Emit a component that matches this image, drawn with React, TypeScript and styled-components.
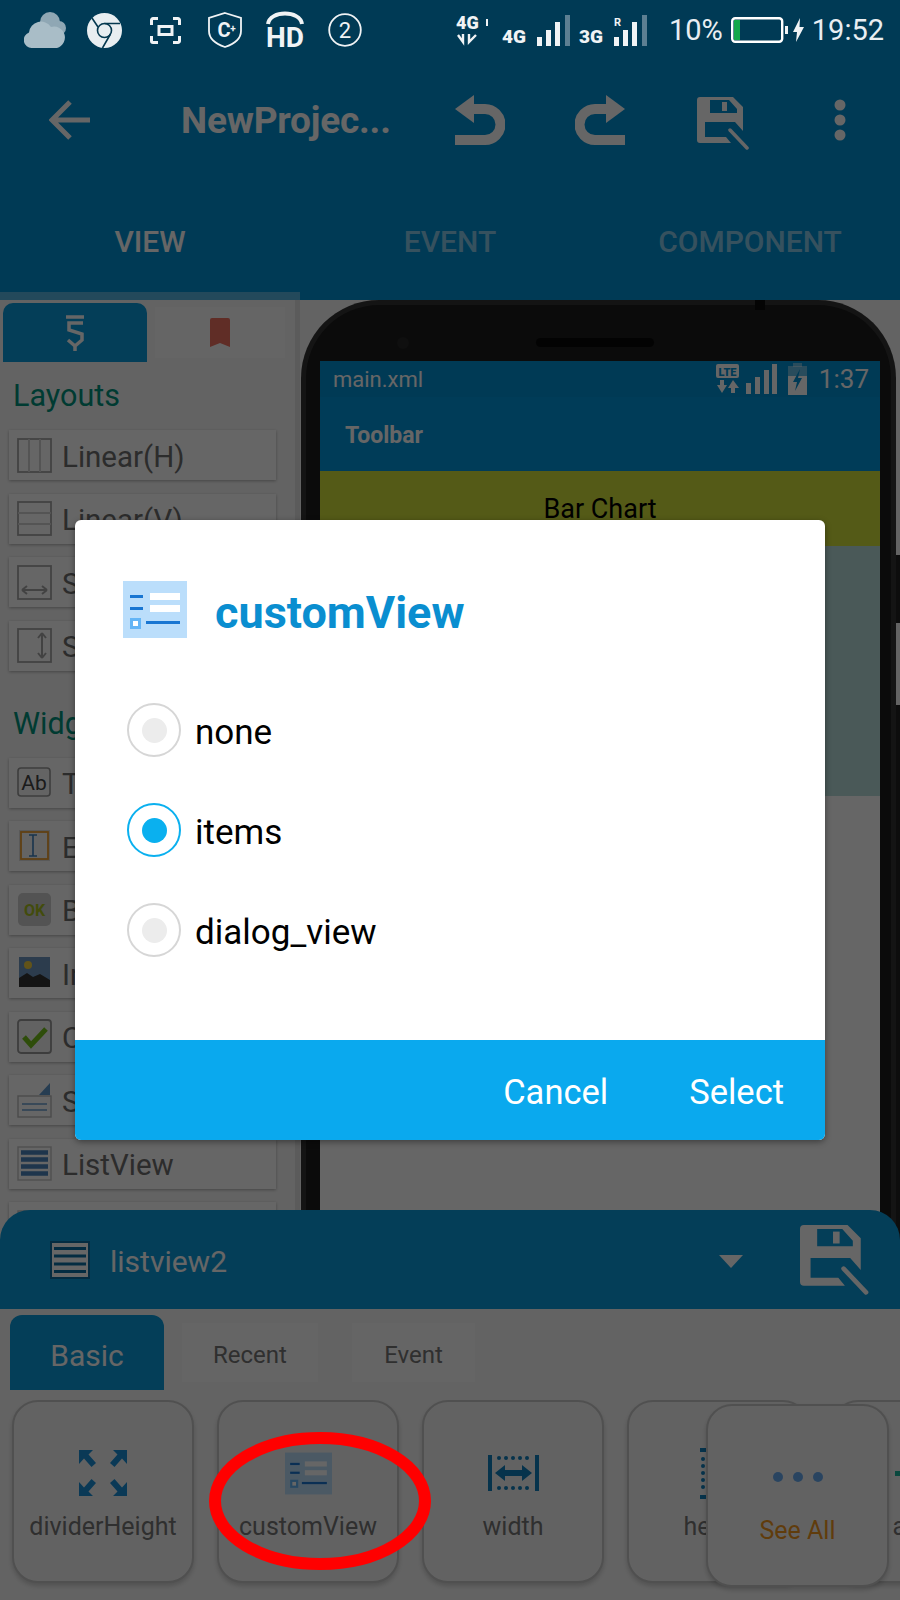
import React, { FC } from "react";
import styled, { createGlobalStyle } from "styled-components";

const GlobalStyle = createGlobalStyle`
  html, body {
    margin: 0;
    padding: 0;
    background: #f8f8f8;
    font-family: Roboto, "Liberation Sans", sans-serif;
  }
  * { box-sizing: border-box; }
`;

const Page = styled.div`
  position: relative;
  width: 900px;
  height: 1600px;
  overflow: hidden;
  background: #f8f8f8;
`;

const Header = styled.header`
  height: 300px;
  background: #0091d5;
`;

const StatusBar = styled.div`
  position: relative;
  z-index: 3;
  height: 60px;
  display: flex;
  align-items: center;
  justify-content: space-between;
  padding: 0 16px 0 24px;
  color: #e9eef2;
`;

const StatusGroup = styled.div`
  display: flex;
  align-items: center;
`;

const StatusIcon = styled.svg<{ $ml?: number }>`
  display: block;
  flex: none;
  margin-left: ${(p) => p.$ml ?? 0}px;
`;

const StatusText = styled.span<{ $ml: number }>`
  margin-left: ${(p) => p.$ml}px;
  font-size: 29px;
  line-height: 34px;
`;

const NetLabel = styled.span<{ $ml: number }>`
  width: 24px;
  margin: 14px 0 0 ${(p) => p.$ml}px;
  font-size: 19px;
  font-weight: 900;
  line-height: 22px;
  text-align: center;
  color: #f0f3f5;
`;

const Toolbar = styled.div`
  height: 120px;
  display: flex;
  align-items: center;
`;

const ToolSlot = styled.div<{ $w: number }>`
  width: ${(p) => p.$w}px;
  display: flex;
  justify-content: center;
  align-items: center;
`;

const SaveSlot = styled(ToolSlot)`
  padding: 7px 0 0 7px;
`;

const Title = styled.div`
  flex: 1;
  padding-left: 41px;
  color: #fff;
  font-size: 37px;
  font-weight: 700;
  letter-spacing: -0.2px;
`;

const Tabs = styled.div`
  height: 120px;
  display: flex;
`;

const Tab = styled.div<{ $active?: boolean }>`
  flex: 1;
  display: flex;
  align-items: center;
  justify-content: center;
  padding-top: 10px;
  font-size: 30px;
  font-weight: 500;
  color: ${(p) => (p.$active ? "#fff" : "rgba(255,255,255,0.55)")};
  border-bottom: 8px solid ${(p) => (p.$active ? "rgba(255,255,255,0.35)" : "transparent")};
`;

const Workspace = styled.div`
  height: 1300px;
  display: flex;
`;

const Palette = styled.aside`
  width: 300px;
  flex: none;
  padding: 3px 0 0 3px;
  border-right: 5px solid #e4e4e4;
`;

const PaletteTabs = styled.div`
  display: flex;
  align-items: flex-start;
  gap: 8px;
  height: 59px;
`;

const PaletteTabOn = styled.div`
  width: 144px;
  height: 59px;
  border-radius: 10px 10px 0 0;
  background: #0b9bdc;
  display: flex;
  align-items: center;
  justify-content: center;
`;

const PaletteTabOff = styled.div`
  width: 130px;
  height: 51px;
  margin-top: 4px;
  background: #fdfdfd;
  display: flex;
  align-items: center;
  justify-content: center;
`;

const SectionTitle = styled.div<{ $mt?: number }>`
  height: 68px;
  margin-top: ${(p) => p.$mt ?? 0}px;
  padding-left: 10px;
  font-size: 30.5px;
  line-height: 68px;
  color: #00937d;
`;

const PaletteList = styled.div`
  display: flex;
  flex-direction: column;
  gap: 13.5px;
  padding-left: 6px;
  width: 273px;
`;

const PaletteItem = styled.div`
  height: 50px;
  display: flex;
  align-items: center;
  gap: 10px;
  padding: 3px 0 0 8px;
  background: #fff;
  box-shadow: 0 1px 3px rgba(0, 0, 0, 0.3);
  font-size: 29.5px;
  color: #6e6e6e;
  white-space: nowrap;
`;

const Preview = styled.main`
  flex: 1;
  padding: 0 4px 0 1px;
`;

const PhoneFrame = styled.div`
  position: relative;
  height: 1300px;
  background: #1c1c1c;
  border: 5px solid #343434;
  border-bottom: 0;
  border-radius: 78px 78px 0 0;
  padding: 0 11px 0 14px;
`;

const SideButton = styled.div<{ $top: number; $h: number }>`
  position: absolute;
  right: -9px;
  top: ${(p) => p.$top}px;
  width: 4px;
  height: ${(p) => p.$h}px;
  background: #222;
`;

const TopNotch = styled.div`
  position: absolute;
  top: -5px;
  left: 449px;
  width: 10px;
  height: 10px;
  background: #0a0a0a;
`;

const PhoneTop = styled.div`
  height: 56px;
  display: flex;
  align-items: center;
`;

const Camera = styled.div`
  width: 12px;
  height: 12px;
  margin: 20px 0 0 77px;
  border-radius: 50%;
  background: #262626;
`;

const Speaker = styled.div`
  width: 118px;
  height: 9px;
  margin: 18px 0 0 127px;
  border-radius: 5px;
  background: #080808;
`;

const Screen = styled.div`
  height: 1240px;
  background: #fff;
`;

const ScreenStatus = styled.div`
  height: 36px;
  display: flex;
  align-items: center;
  justify-content: space-between;
  padding: 0 11px 0 13px;
  background: #0091d5;
  color: #fff;
`;

const FileName = styled.span`
  font-size: 22px;
`;

const ScreenClock = styled.span`
  margin-left: 12px;
  font-size: 26px;
`;

const ScreenToolbar = styled.div`
  height: 74px;
  display: flex;
  align-items: center;
  padding: 2px 0 0 25px;
  background: #0096dc;
  color: #fff;
  font-size: 23px;
  font-weight: 700;
`;

const ChartTitle = styled.div`
  height: 75px;
  display: flex;
  justify-content: center;
  padding-top: 22px;
  background: #d2e13a;
  color: #000;
  font-size: 27px;
  line-height: 32px;
`;

const ChartArea = styled.div`
  height: 250px;
  background: #b9dedc;
`;

const Sheet = styled.section`
  position: absolute;
  z-index: 1;
  left: 0;
  right: 0;
  bottom: 0;
  height: 390px;
`;

const SheetHeader = styled.div`
  height: 99px;
  display: flex;
  align-items: center;
  padding: 0 30px 0 50px;
  border-radius: 30px 30px 0 0;
  background: #0b9bdc;
  color: #fff;
`;

const SheetName = styled.span`
  flex: 1;
  margin: 4px 0 0 20px;
  font-size: 30px;
`;

const SheetCaret = styled.div`
  width: 0;
  height: 0;
  margin: 4px 57px 0 0;
  border-left: 12.5px solid transparent;
  border-right: 12.5px solid transparent;
  border-top: 13px solid #fff;
`;

const SheetBody = styled.div`
  position: relative;
  height: 291px;
  padding-top: 6px;
  background: #f8f8f8;
`;

const PropTabs = styled.div`
  height: 75px;
  display: flex;
  align-items: flex-start;
  padding-left: 10px;
`;

const PropTabOn = styled.div`
  width: 154px;
  height: 75px;
  padding-top: 6px;
  border-radius: 12px 12px 0 0;
  background: #0b9bdc;
  color: #fff;
  font-size: 30px;
  display: flex;
  align-items: center;
  justify-content: center;
`;

const PropTabOff = styled.div<{ $w: number; $ml: number }>`
  width: ${(p) => p.$w}px;
  height: 59px;
  margin: 8px 0 0 ${(p) => p.$ml}px;
  padding-top: 5px;
  background: #fcfcfc;
  color: #777;
  font-size: 24px;
  display: flex;
  align-items: center;
  justify-content: center;
`;

const Cards = styled.div`
  display: flex;
  gap: 23px;
  margin-top: 10px;
  padding-left: 12px;
  overflow: hidden;
  height: 194px;
`;

const Card = styled.div`
  width: 182px;
  height: 183px;
  flex: none;
  display: flex;
  flex-direction: column;
  align-items: center;
  padding-top: 46px;
  border: 2.5px solid #c8c8c8;
  border-radius: 26px;
  background: #f6f6f6;
  box-shadow: 0 3px 5px rgba(0, 0, 0, 0.18);
`;

const CardIcon = styled.div`
  height: 50px;
  display: flex;
  align-items: center;
  justify-content: center;
`;

const CardLabel = styled.div<{ $color?: string }>`
  margin-top: 14px;
  font-size: 25px;
  line-height: 30px;
  color: ${(p) => p.$color ?? "#777"};
  white-space: nowrap;
`;

const SeeAllCard = styled(Card)`
  position: absolute;
  left: 706px;
  top: 95px;
  width: 183px;
`;

const Scrim = styled.div`
  position: absolute;
  z-index: 2;
  inset: 0;
  background: rgba(0, 0, 0, 0.6);
`;

const Dialog = styled.div`
  position: absolute;
  z-index: 4;
  left: 75px;
  top: 520px;
  width: 750px;
  height: 620px;
  display: flex;
  flex-direction: column;
  border-radius: 6px;
  overflow: hidden;
  background: #fff;
  box-shadow: 0 2px 6px rgba(0, 0, 0, 0.4);
`;

const DialogHead = styled.div`
  display: flex;
  align-items: center;
  gap: 28px;
  padding: 61px 0 0 48px;
`;

const DialogTitle = styled.div`
  margin-top: 6px;
  font-size: 45px;
  font-weight: 700;
  line-height: 51px;
  color: #0a8ed0;
`;

const Options = styled.div`
  flex: 1;
  padding: 42px 0 0 52px;
`;

const Option = styled.div`
  height: 100px;
  display: flex;
  align-items: center;
  gap: 14px;
  font-size: 35px;
  color: #000;
`;

const OptionLabel = styled.span`
  margin-top: 4px;
`;

const Radio = styled.div<{ $checked?: boolean }>`
  width: 54px;
  height: 54px;
  display: flex;
  align-items: center;
  justify-content: center;
  border-radius: 50%;
  border: ${(p) => (p.$checked ? "2px solid #0ab0ef" : "2.5px solid #d6d6d6")};
  &::after {
    content: "";
    width: 25px;
    height: 25px;
    border-radius: 50%;
    background: ${(p) => (p.$checked ? "#0ab0ef" : "#ececec")};
  }
`;

const DialogFooter = styled.div`
  height: 100px;
  display: flex;
  align-items: center;
  justify-content: flex-end;
  gap: 81px;
  padding: 4px 41px 0 0;
  background: #0aa9ee;
  color: #fff;
  font-size: 34.5px;
`;

const Annotation = styled.svg`
  position: absolute;
  z-index: 4;
  left: 209px;
  top: 1432px;
`;

const ARROW = { fill: "none", stroke: "#fff", strokeWidth: 5 };

const SaveIcon: FC<{ size: number }> = ({ size }) => (
  <svg width={size} height={size} viewBox="0 0 53 53">
    <path
      fill="#fff"
      fillRule="evenodd"
      d="M3 0H36L46 10V34L38 25H8V40H29L34 46H3A3 3 0 0 1 0 43V3A3 3 0 0 1 3 0ZM13 3V16H40V12L32 3Z"
    />
    <rect x="25" y="5" width="5" height="9" fill="#fff" />
    <path d="M33 33L50 51" stroke="#fff" strokeWidth="3.500" strokeLinecap="round" fill="none" />
  </svg>
);

const UndoIcon: FC<{ flip?: boolean }> = ({ flip }) => (
  <svg width="50" height="50" viewBox="0 0 50 50">
    <g transform={flip ? "matrix(-1 0 0 1 50 0)" : undefined}>
      <path d="M0 14L19 0V28Z" fill="#fff" />
      <path d="M14 14H30A15.500 15.500 0 0 1 30 45H0" fill="none" stroke="#fff" strokeWidth="10" />
    </g>
  </svg>
);

const CustomViewIcon: FC<{ w: number; h: number }> = ({ w, h }) => (
  <svg width={w} height={h} viewBox="0 0 64 57">
    <rect width="64" height="57" fill="#bbdefb" />
    <rect x="7" y="14" width="13" height="3" fill="#1976d2" />
    <rect x="7" y="26" width="13" height="3" fill="#1976d2" />
    <rect x="27" y="12" width="30" height="7" fill="#fff" />
    <rect x="27" y="24" width="30" height="7" fill="#fff" />
    <rect x="7" y="37" width="11" height="11" fill="#64b5f6" />
    <rect x="10" y="40" width="5" height="5" fill="#fff" />
    <rect x="23" y="40" width="34" height="3" fill="#1976d2" />
  </svg>
);

const CORNER = "M0 0H14L9.500 4.500L17 13L12.500 17L5 8.500L0 14Z";

const ExpandIcon: FC = () => (
  <svg width="48" height="46" viewBox="0 0 48 46" fill="#1a90d8">
    <path d={CORNER} />
    <path d={CORNER} transform="matrix(-1 0 0 1 48 0)" />
    <path d={CORNER} transform="matrix(1 0 0 -1 0 46)" />
    <path d={CORNER} transform="matrix(-1 0 0 -1 48 46)" />
  </svg>
);

const WidthIcon: FC<{ rotate?: boolean }> = ({ rotate }) => (
  <svg width={rotate ? 36 : 51} height={rotate ? 51 : 36} viewBox={rotate ? "0 0 36 51" : "0 0 51 36"}>
    <g fill="#1180bd" transform={rotate ? "matrix(0 1 1 0 0 0)" : undefined}>
      <rect width="4" height="36" />
      <rect x="47" width="4" height="36" />
      {[10, 17, 24, 31, 38].map((x) => (
        <React.Fragment key={x}>
          <circle cx={x + 1} cy="3" r="2" />
          <circle cx={x + 1} cy="33" r="2" />
        </React.Fragment>
      ))}
      <path d="M7 18L17 10V15H34V10L44 18L34 26V21H17V26Z" />
    </g>
  </svg>
);

const TileBox: FC<{ children: React.ReactNode }> = ({ children }) => (
  <svg width="35" height="35" viewBox="0 0 35 35" fill="none" style={{ flex: "none", marginTop: -3 }}>
    {children}
  </svg>
);

const LINE = "#d2d2d2";
const DARK = "#a6a6a6";

const ICONS: Record<string, React.ReactNode> = {
  linearH: (
    <>
      <rect x="1" y="1" width="33" height="33" stroke={DARK} strokeWidth="1.800" />
      <path d="M12 1V34M23 1V34" stroke={LINE} strokeWidth="2" />
    </>
  ),
  linearV: (
    <>
      <rect x="1" y="1" width="33" height="33" stroke={DARK} strokeWidth="1.800" />
      <path d="M1 12H34M1 23H34" stroke={LINE} strokeWidth="2" />
    </>
  ),
  scrollH: (
    <>
      <rect x="1" y="1" width="33" height="33" stroke={DARK} strokeWidth="1.800" />
      <path d="M5 25H30M5 25L10 21M5 25L10 29M30 25L25 21M30 25L25 29" stroke={DARK} strokeWidth="2" />
    </>
  ),
  scrollV: (
    <>
      <rect x="1" y="1" width="33" height="33" stroke={DARK} strokeWidth="1.800" />
      <path d="M25 5V30M25 5L21 10M25 5L29 10M25 30L21 25M25 30L29 25" stroke={DARK} strokeWidth="2" />
    </>
  ),
  text: (
    <>
      <rect x="1" y="3" width="32" height="28" rx="3" stroke="#999" strokeWidth="1.600" fill="#fafafa" />
      <text x="17" y="25" textAnchor="middle" fontFamily="Roboto" fontSize="21" fill="#444">Ab</text>
    </>
  ),
  edit: (
    <>
      <rect x="2" y="1" width="31" height="31" fill="#dfdfdf" />
      <rect x="4" y="3" width="27" height="27" stroke="#f0a030" strokeWidth="1.800" fill="#fafafa" />
      <path d="M12 6H20M12 27H20M16 6V27" stroke="#3f82bf" strokeWidth="1.600" />
    </>
  ),
  button: (
    <>
      <rect x="1" y="1" width="33" height="33" rx="5" fill="#cfcfcf" />
      <text x="17.500" y="24" textAnchor="middle" fontFamily="Roboto" fontSize="16" fontWeight="700" fill="#a6bd1f">OK</text>
    </>
  ),
  image: (
    <>
      <rect x="2" y="1" width="31" height="30" fill="#6f97c0" />
      <circle cx="11" cy="9" r="4" fill="#f4d03f" />
      <path d="M2 31V22L10 17L16 21L23 18L33 24V31Z" fill="#333" />
    </>
  ),
  check: (
    <>
      <rect x="1" y="1" width="33" height="33" rx="3" stroke="#999" strokeWidth="1.800" fill="#f4f4f4" />
      <path d="M7 18L14 26L29 10" stroke="#74c11b" strokeWidth="5" />
    </>
  ),
  spinner: (
    <>
      <rect x="1" y="13" width="33" height="21" stroke="#bbb" strokeWidth="1.400" fill="#fff" />
      <path d="M5 21H30M5 27H30" stroke="#6a9fd0" strokeWidth="1.600" />
      <path d="M33 0V12H22Z" fill="#5f98cc" />
    </>
  ),
  list: (
    <>
      <rect x="1" y="1" width="33" height="33" stroke="#c5c5c5" strokeWidth="1.400" />
      <path d="M4 6.500H31M4 13.500H31M4 20.500H31M4 27.500H31" stroke="#4b84bd" strokeWidth="4.400" />
    </>
  ),
  web: <rect x="1" y="1" width="33" height="33" stroke="#c5c5c5" strokeWidth="1.400" />,
};

const LAYOUTS = [
  ["linearH", "Linear(H)"],
  ["linearV", "Linear(V)"],
  ["scrollH", "ScrollView(H)"],
  ["scrollV", "ScrollView(V)"],
];

const WIDGETS = [
  ["text", "TextView"],
  ["edit", "EditText"],
  ["button", "Button"],
  ["image", "ImageView"],
  ["check", "CheckBox"],
  ["spinner", "Spinner"],
  ["list", "ListView"],
  ["web", "WebView"],
];

const Signal: FC<{ ml: number; roaming?: boolean }> = ({ ml, roaming }) => (
  <StatusIcon $ml={ml} width="34" height="31" viewBox="0 0 34 31" fill="#f0f3f5">
    {roaming && (
      <text x="0" y="11" fontFamily="Roboto" fontSize="11" fontWeight="700">
        R
      </text>
    )}
    <rect x="0" y="22" width="5" height="9" />
    <rect x="9" y="15" width="5" height="16" />
    <rect x="18" y="7" width="5" height="24" />
    <rect x="28" y="0" width="5" height="31" fill="#5d7f92" />
  </StatusIcon>
);

const App: FC = () => {
  return (
    <Page>
      <GlobalStyle />
      <Header>
        <StatusBar>
          <StatusGroup>
            <StatusIcon width="42" height="36" viewBox="0 0 42 36">
              <circle cx="26" cy="10" r="10" fill="#8fa7b4" />
              <circle cx="35" cy="16" r="7" fill="#8fa7b4" />
              <path d="M8 36A8 8 0 0 1 5 20.500A12 12 0 0 1 27 15A10.500 10.500 0 0 1 33 36Z" fill="#a9bdc7" />
            </StatusIcon>
            <StatusIcon $ml={21} width="35" height="35" viewBox="0 0 35 35">
              <circle cx="17.500" cy="17.500" r="17.500" fill="#e8eef1" />
              <circle cx="17.500" cy="17.500" r="7" fill="none" stroke="#04384f" strokeWidth="1.600" />
              <path d="M17.500 10.500H33M11 14L5 5M23.500 21L15.500 35" stroke="#04384f" strokeWidth="1.600" />
            </StatusIcon>
            <StatusIcon $ml={28} width="31" height="27" viewBox="0 0 31 27" fill="none" stroke="#f0f3f5" strokeWidth="3">
              <path d="M1.500 8V3A1.500 1.500 0 0 1 3 1.500H8M23 1.500H28A1.500 1.500 0 0 1 29.500 3V8M1.500 19V24A1.500 1.500 0 0 0 3 25.500H8M23 25.500H28A1.500 1.500 0 0 0 29.500 24V19" />
              <rect x="9" y="9.500" width="13" height="8" />
            </StatusIcon>
            <StatusIcon $ml={27} width="34" height="36" viewBox="0 0 34 36">
              <path d="M17 1L33 6V19C33 27 26 32 17 35C8 32 1 27 1 19V6Z" fill="none" stroke="#f0f3f5" strokeWidth="1.800" />
              <text x="16" y="25" textAnchor="middle" fontFamily="Roboto" fontSize="20" fontWeight="700" fill="#f0f3f5">C</text>
              <text x="25" y="20" textAnchor="middle" fontFamily="Roboto" fontSize="10" fontWeight="700" fill="#f0f3f5">+</text>
            </StatusIcon>
            <StatusIcon $ml={23} width="40" height="46" viewBox="0 -3 40 46">
              <path d="M3 14C5 0 35 0 37 14" fill="none" stroke="#f0f3f5" strokeWidth="4" />
              <text x="20" y="37" textAnchor="middle" fontFamily="Roboto" fontSize="28" fontWeight="700" fill="#f0f3f5">HD</text>
            </StatusIcon>
            <StatusIcon $ml={23} width="34" height="34" viewBox="0 0 34 34">
              <circle cx="17" cy="17" r="15.800" fill="none" stroke="#f0f3f5" strokeWidth="1.800" />
              <text x="17" y="25" textAnchor="middle" fontFamily="Roboto" fontSize="22" fill="#f0f3f5">2</text>
            </StatusIcon>
          </StatusGroup>
          <StatusGroup>
            <StatusIcon width="33" height="38" viewBox="0 -4 33 38">
              <text x="0" y="14" fontFamily="Roboto" fontSize="18" fontWeight="900" fill="#f0f3f5">4G</text>
              <rect x="30" y="4" width="2" height="7" fill="#f0f3f5" />
              <path d="M2 20L7 27L7 19M13 19V27L20 20" fill="none" stroke="#f0f3f5" strokeWidth="2.400" />
            </StatusIcon>
            <NetLabel $ml={13}>4G</NetLabel>
            <Signal ml={11} />
            <NetLabel $ml={8}>3G</NetLabel>
            <Signal ml={11} roaming />
            <StatusText $ml={21}>10%</StatusText>
            <StatusIcon $ml={8} width="58" height="26" viewBox="0 0 58 26">
              <rect x="1.200" y="1.200" width="50" height="23.600" rx="3" fill="none" stroke="#fff" strokeWidth="2.400" />
              <rect x="3" y="3" width="6" height="20" fill="#14a84a" />
              <rect x="54" y="9" width="3" height="8" fill="#f0f3f5" />
            </StatusIcon>
            <StatusIcon $ml={4} width="11" height="24" viewBox="0 0 11 24">
              <path d="M7 0L0 14H4L3 24L11 9H6.500Z" fill="#f0f3f5" />
            </StatusIcon>
            <StatusText $ml={8}>19:52</StatusText>
          </StatusGroup>
        </StatusBar>
        <Toolbar>
          <ToolSlot $w={140}>
            <svg width="42" height="42" viewBox="0 0 42 42">
              <path d="M41 21H4M21 3L3 21L21 39" {...ARROW} />
            </svg>
          </ToolSlot>
          <Title>NewProjec...</Title>
          <ToolSlot $w={120}>
            <UndoIcon />
          </ToolSlot>
          <ToolSlot $w={120}>
            <UndoIcon flip />
          </ToolSlot>
          <SaveSlot $w={120}>
            <SaveIcon size={53} />
          </SaveSlot>
          <ToolSlot $w={120}>
            <svg width="12" height="42" viewBox="0 0 12 42" fill="#fff">
              <circle cx="6" cy="6" r="5.500" />
              <circle cx="6" cy="21" r="5.500" />
              <circle cx="6" cy="36" r="5.500" />
            </svg>
          </ToolSlot>
        </Toolbar>
        <Tabs>
          <Tab $active>VIEW</Tab>
          <Tab>EVENT</Tab>
          <Tab>COMPONENT</Tab>
        </Tabs>
      </Header>

      <Workspace>
        <Palette>
          <PaletteTabs>
            <PaletteTabOn>
              <svg width="20" height="36" viewBox="0 0 20 36" fill="none" stroke="#fff" strokeWidth="3.500">
                <path d="M1 2H19M18 8H4V15L17 19V25L10 31L3 25M10 31V36" />
              </svg>
            </PaletteTabOn>
            <PaletteTabOff>
              <svg width="20" height="29" viewBox="0 0 20 29">
                <path d="M2 0H18A2 2 0 0 1 20 2V29L10 25L0 29V2A2 2 0 0 1 2 0Z" fill="#f07060" />
              </svg>
            </PaletteTabOff>
          </PaletteTabs>
          <SectionTitle>Layouts</SectionTitle>
          <PaletteList>
            {LAYOUTS.map(([icon, name]) => (
              <PaletteItem key={name}>
                <TileBox>{ICONS[icon]}</TileBox>
                {name}
              </PaletteItem>
            ))}
          </PaletteList>
          <SectionTitle $mt={19}>Widgets</SectionTitle>
          <PaletteList>
            {WIDGETS.map(([icon, name]) => (
              <PaletteItem key={name}>
                <TileBox>{ICONS[icon]}</TileBox>
                {name}
              </PaletteItem>
            ))}
          </PaletteList>
        </Palette>

        <Preview>
          <PhoneFrame>
            <TopNotch />
            <SideButton $top={250} $h={68} />
            <SideButton $top={400} $h={600} />
            <PhoneTop>
              <Camera />
              <Speaker />
            </PhoneTop>
            <Screen>
              <ScreenStatus>
                <FileName>main.xml</FileName>
                <StatusGroup>
                  <svg width="24" height="30" viewBox="0 0 24 30" fill="#fff">
                    <rect width="23" height="14" rx="2" />
                    <text x="11.500" y="11.500" textAnchor="middle" fontFamily="Roboto" fontSize="11" fontWeight="900" fill="#0091d5">LTE</text>
                    <path d="M6 29L1 21H4V16H8V21H11ZM17 16L23 24H19V29H15V24H12Z" />
                  </svg>
                  <svg width="32" height="30" viewBox="0 0 32 30" fill="#fff" style={{ marginLeft: 6 }}>
                    <rect x="0" y="19" width="5" height="11" />
                    <rect x="9" y="13" width="5" height="17" />
                    <rect x="18" y="6" width="5" height="24" />
                    <rect x="26" y="0" width="5" height="30" />
                  </svg>
                  <svg width="19" height="32" viewBox="0 0 19 32" style={{ marginLeft: 10 }}>
                    <rect x="5" y="0" width="9" height="4" fill="#fff" opacity="0.4" />
                    <rect x="0" y="3" width="19" height="10" fill="#fff" opacity="0.4" />
                    <rect x="0" y="13" width="19" height="19" fill="#fff" />
                    <path d="M12 6L5 19H9L7 28L14 15H10Z" fill="#0091d5" />
                  </svg>
                  <ScreenClock>1:37</ScreenClock>
                </StatusGroup>
              </ScreenStatus>
              <ScreenToolbar>Toolbar</ScreenToolbar>
              <ChartTitle>Bar Chart</ChartTitle>
              <ChartArea />
            </Screen>
          </PhoneFrame>
        </Preview>
      </Workspace>

      <Sheet>
        <SheetHeader>
          <svg width="40" height="38" viewBox="0 0 40 38">
            <rect x="1" y="1" width="38" height="36" fill="#fff" stroke="#0a6ea3" strokeWidth="2" />
            <path d="M4 7.500H36M4 15H36M4 23H36M4 30.500H36" stroke="#0a6ea3" strokeWidth="3" />
          </svg>
          <SheetName>listview2</SheetName>
          <SheetCaret />
          <SaveIcon size={70} />
        </SheetHeader>
        <SheetBody>
          <PropTabs>
            <PropTabOn>Basic</PropTabOn>
            <PropTabOff $w={136} $ml={18}>Recent</PropTabOff>
            <PropTabOff $w={123} $ml={34}>Event</PropTabOff>
          </PropTabs>
          <Cards>
            <Card>
              <CardIcon>
                <ExpandIcon />
              </CardIcon>
              <CardLabel>dividerHeight</CardLabel>
            </Card>
            <Card>
              <CardIcon>
                <CustomViewIcon w={47} h={43} />
              </CardIcon>
              <CardLabel>customView</CardLabel>
            </Card>
            <Card>
              <CardIcon>
                <WidthIcon />
              </CardIcon>
              <CardLabel>width</CardLabel>
            </Card>
            <Card>
              <CardIcon>
                <WidthIcon rotate />
              </CardIcon>
              <CardLabel>height</CardLabel>
            </Card>
            <Card>
              <CardIcon>
                <svg width="56" height="30" viewBox="0 0 56 30">
                  <rect x="0" y="13" width="56" height="5" fill="#1bb39c" />
                </svg>
              </CardIcon>
              <CardLabel>alpha</CardLabel>
            </Card>
          </Cards>
          <SeeAllCard>
            <CardIcon>
              <svg width="50" height="10" viewBox="0 0 50 10" fill="#68aaf0">
                <circle cx="5" cy="5" r="5" />
                <circle cx="25" cy="5" r="5" />
                <circle cx="45" cy="5" r="5" />
              </svg>
            </CardIcon>
            <CardLabel $color="#f0971f">See All</CardLabel>
          </SeeAllCard>
        </SheetBody>
      </Sheet>

      <Scrim />

      <Dialog>
        <DialogHead>
          <CustomViewIcon w={64} h={57} />
          <DialogTitle>customView</DialogTitle>
        </DialogHead>
        <Options>
          <Option>
            <Radio />
            <OptionLabel>none</OptionLabel>
          </Option>
          <Option>
            <Radio $checked />
            <OptionLabel>items</OptionLabel>
          </Option>
          <Option>
            <Radio />
            <OptionLabel>dialog_view</OptionLabel>
          </Option>
        </Options>
        <DialogFooter>
          <span>Cancel</span>
          <span>Select</span>
        </DialogFooter>
      </Dialog>

      <Annotation width="222" height="138" viewBox="0 0 222 138">
        <ellipse cx="111" cy="69" rx="105" ry="63" fill="none" stroke="#ff0000" strokeWidth="12" />
      </Annotation>
    </Page>
  );
};

export default App;
